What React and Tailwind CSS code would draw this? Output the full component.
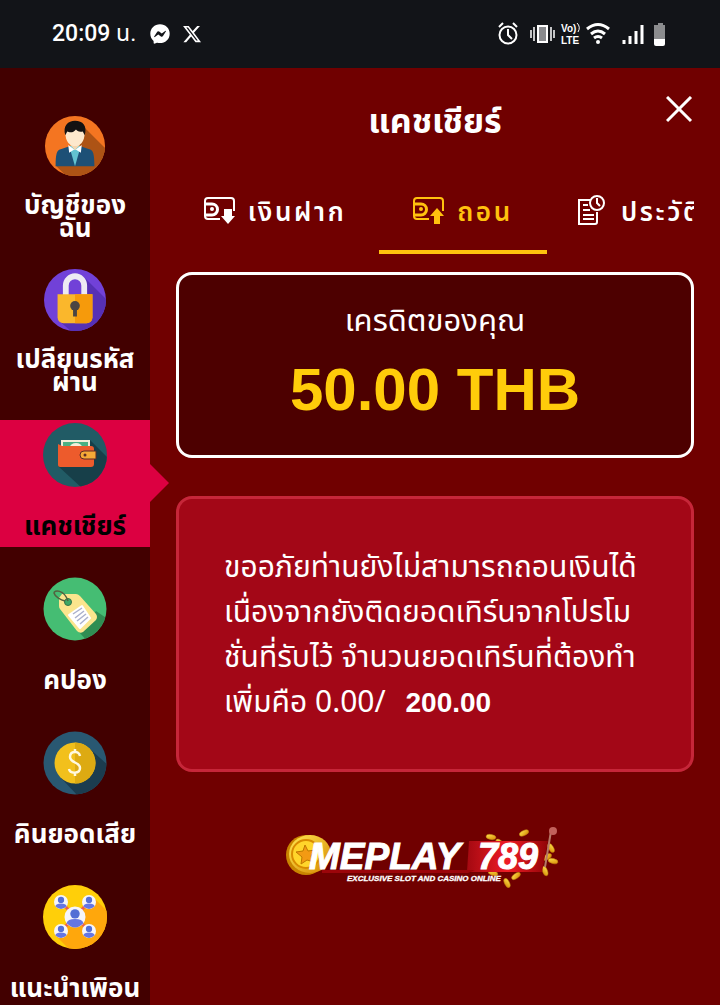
import React, { useState } from 'react';
import { FaFacebookMessenger, FaXTwitter } from 'react-icons/fa6';

const AccountIcon = () => (
    <svg viewBox="0 0 64 64" className="size-16" aria-hidden="true">
        <clipPath id="accountClip"><circle cx="32" cy="32" r="31" /></clipPath>
        <g clipPath="url(#accountClip)">
            <rect width="64" height="64" fill="#f47521" />
            <path d="M41 12 L66 37 L66 66 L26 66 L12 52 L32 30Z" fill="#ad5315" />
            <path d="M12 53 C12 40 13 36 18 35 L27 32 H37 L46 35 C51 36 52 40 52 53Z" fill="#1d5076" />
            <path d="M26 32 L32 53 L38 32Z" fill="#62c3d1" />
            <path d="M25 31 L32 36 L39 31 L38 39 L32 35 L26 39Z" fill="#fff" />
            <path d="M27 25 H37 V31 L32 36 L27 31Z" fill="#f5d6af" />
            <path d="M22 18 C22 10 42 10 42 18 C42 28 37 32 32 32 C27 32 22 28 22 18Z" fill="#fde8cc" />
            <path d="M22 21 C19 11 25 6 32 6 C40 6 45 11 42 21 L40 17 C36 18 34 16 33 15 C30 19 26 18 24 17Z" fill="#141212" />
        </g>
    </svg>
);

const PasswordIcon = () => (
    <svg viewBox="0 0 64 64" className="size-16" aria-hidden="true">
        <clipPath id="lockClip"><circle cx="32" cy="32" r="32" /></clipPath>
        <g clipPath="url(#lockClip)">
            <rect width="64" height="64" fill="#7141d8" />
            <path d="M42 9 L66 33 V66 H30 L16 54 L40 30Z" fill="#5630b5" />
            <path d="M22.500 28 V17 a9.500 9.500 0 0 1 19 0 V28" fill="none" stroke="#edeaf3" strokeWidth="6" />
            <path d="M14 26 H50 V50 a6 6 0 0 1 -6 6 H20 a6 6 0 0 1 -6 -6Z" fill="#fab72c" />
            <path d="M32 26 H50 V50 a6 6 0 0 1 -6 6 H32Z" fill="#f69a0b" />
            <circle cx="32" cy="38" r="5" fill="#4b4543" />
            <path d="M30 39 H34 V49 H30Z" fill="#4b4543" />
        </g>
    </svg>
);

const WalletIcon = () => (
    <svg viewBox="0 0 64 64" className="size-16" aria-hidden="true">
        <clipPath id="walletClip"><circle cx="32" cy="32" r="32" /></clipPath>
        <g clipPath="url(#walletClip)">
            <rect width="64" height="64" fill="#215b65" />
            <path d="M47 17 L66 36 V66 H40 L15 43 L47 40Z" fill="#173f49" />
            <rect x="18" y="17" width="29" height="9" fill="#f2eed9" />
            <path d="M20 19 H45 V24 H39 a6 4 0 0 0 -12 0 H20Z" fill="#4bb184" />
            <path d="M15 21 L19 23 H48 a3 3 0 0 1 3 3 V41 a3 3 0 0 1 -3 3 H17 a2 2 0 0 1 -2 -2Z" fill="#ed5b2c" />
            <path d="M53 28 H41 a4 4 0 0 0 0 8 H53Z" fill="#f5a937" stroke="#5d2b25" />
            <circle cx="42" cy="32" r="1.500" fill="#5d2b25" />
        </g>
    </svg>
);

const CouponIcon = () => (
    <svg viewBox="0 0 64 64" className="size-16" aria-hidden="true">
        <clipPath id="couponClip"><circle cx="32" cy="32" r="31.500" /></clipPath>
        <g clipPath="url(#couponClip)">
            <rect width="64" height="64" fill="#45bd73" />
            <path d="M53 34 L66 43 V66 H46 L36 55Z" fill="#308e53" />
            <path d="M19 17 L33 17 Q35 17 37 19 L53 37 Q55 40 53 43 L40 55 Q37 57 34 54 L17 32 Q16 31 16 29 L16 21Z" fill="#fbe58d" />
            <path d="M39 29 L47 41 L37 51 L26 38Z" fill="#fff" stroke="#fff" strokeWidth="2" strokeLinejoin="round" />
            <path d="M30 37 L39 31 M32 41 L41 34 M34 44 L43 37 M37 47 L45 40" stroke="#abb1cd" strokeWidth="1.500" />
            <circle cx="25" cy="25" r="3.500" fill="#3da865" stroke="#347447" />
            <path d="M25 24 C21 12 11 13 11 16 C12 20 18 23 22 24" fill="none" stroke="#53613f" strokeWidth="1.500" />
        </g>
    </svg>
);

const CashbackIcon = () => (
    <svg viewBox="0 0 64 64" className="size-16" aria-hidden="true">
        <clipPath id="coinClip"><circle cx="32" cy="32" r="31.500" /></clipPath>
        <g clipPath="url(#coinClip)">
            <rect width="64" height="64" fill="#295872" />
            <path d="M47 18 L66 35 V66 H36 L18 47Z" fill="#1b3c4f" />
            <circle cx="32" cy="32" r="20.500" fill="#f2c01c" />
            <path d="M32 11.500 a20.500 20.500 0 0 1 0 41Z" fill="#ddaa12" />
            <path d="M37 25 C36 19 27 20 27 26 C27 32 37 31 37 37 C37 43 27 43 26 38 M32 18 V22 M32 41 V45" fill="none" stroke="#fff8df" strokeWidth="2.500" />
        </g>
    </svg>
);

const people = [
    [18, 17, 7],
    [46, 17, 7],
    [18, 46, 7],
    [46, 46, 7],
    [32, 32, 10.5],
];

const FriendsIcon = () => (
    <svg viewBox="0 0 64 64" className="size-16" aria-hidden="true">
        <clipPath id="friendsClip"><circle cx="32" cy="32" r="32" /></clipPath>
        <g clipPath="url(#friendsClip)">
            <rect width="64" height="64" fill="#ffcf09" />
            <path d="M50 12 L68 30 V68 H30 L12 50Z" fill="#ffa70c" />
            <path d="M18 17 L46 46 M46 17 L18 46" stroke="#ed6048" strokeWidth="3" />
            {people.map(([x, y, r]) => (
                <g key={`${x}-${y}`} transform={`translate(${x} ${y}) scale(${r / 10})`}>
                    <circle r="10" fill="#f5f5fa" />
                    <circle cy="-3" r="4.500" fill="#536fd5" />
                    <path d="M-8 6 Q-7 2 0 2 Q7 2 8 6 Q0 14 -8 6Z" fill="#6576e3" />
                </g>
            ))}
        </g>
    </svg>
);

const CardIcon = ({ up }) => (
    <svg viewBox="0 0 32 28" className="h-7 w-8 shrink-0" fill="none" stroke="currentColor" strokeWidth="2" aria-hidden="true">
        <path d="M30 14 V4 a3 3 0 0 0 -3 -3 H4 a3 3 0 0 0 -3 3 V19 a3 3 0 0 0 3 3 H16" />
        <path d="M2 7 H8 a5 5 0 0 1 0 11 H2" strokeWidth="3" />
        <circle cx="8" cy="12" r="2" fill="currentColor" stroke="none" />
        {up
            ? <path d="M24 11 L31 19 H27 V27 H21 V19 H17Z" fill="currentColor" stroke="none" />
            : <path d="M24 27 L31 19 H28 V12 H20 V19 H17Z" fill="currentColor" stroke="none" />}
    </svg>
);

const HistoryIcon = () => (
    <svg viewBox="0 0 28 32" className="h-8 w-7 shrink-0" fill="none" stroke="currentColor" strokeWidth="2" aria-hidden="true">
        <path d="M13 5 H2 V29 H18 a2 2 0 0 0 2 -2 V17" />
        <path d="M6 10 H11 M6 15 H13 M6 20 H17 M6 24 H17" />
        <circle cx="20" cy="8" r="7" />
        <path d="M20 3 V8 L23 11" />
    </svg>
);

const StatusIcons = () => (
    <svg viewBox="0 0 172 26" className="h-[26px] w-[172px]" fill="none" stroke="#fff" strokeWidth="2" role="img" aria-label="VoLTE">
        <circle cx="11" cy="14" r="8.500" />
        <path d="M11 8 V14 L15 18 M2 6 L6 2 M20 6 L16 2" />
        <rect x="41" y="5" width="9" height="16" fill="#898a8d" />
        <path d="M34 9 V17 M37 6 V20 M54 6 V20 M57 9 V17" strokeWidth="1.500" />
        <g fill="#fff" stroke="none" fontFamily="Liberation Sans" fontWeight="bold">
            <text x="64" y="11" fontSize="10">Vo)</text>
            <text x="64" y="23" fontSize="10">LTE</text>
        </g>
        <path d="M80 2 Q84 6 81 11" strokeWidth="1" />
        <path d="M90 8 Q101 -1 112 8 M94 13 Q101 7 108 13 M97 17 Q101 14 105 17" strokeWidth="3" />
        <circle cx="101" cy="21" r="2" fill="#fff" stroke="none" />
        <path d="M127 23 V19 M133 23 V15 M139 23 V10 M145 23 V4" strokeWidth="3" />
        <path d="M161 2 h5 v2 h2 v16 h-11 V4 h4Z" fill="#8b8c8e" stroke="none" />
        <path d="M157 18 h11 v5 q0 2 -2 2 h-7 q-2 0 -2 -2Z" fill="#fff" stroke="none" />
    </svg>
);

const coins = [
    [221, 17, 10], [254, 13, -25], [230, 23, 40], [281, 28, 60], [283, 41, 15],
    [275, 51, 70], [246, 56, -35], [237, 63, 65], [223, 53, 20], [277, 37, -30],
];

const Logo = () => (
    <svg viewBox="0 0 310 90" className="h-[90px] w-[310px]" role="img" aria-label="MEPLAY 789">
        <defs>
            <linearGradient id="logoRed" x1="0" x2="1">
                <stop offset="0" stopColor="#a40911" />
                <stop offset="0.500" stopColor="#ef1c25" />
                <stop offset="1" stopColor="#900407" />
            </linearGradient>
            <linearGradient id="logoGold" x1="0" y1="0" x2="1" y2="1">
                <stop offset="0" stopColor="#ffe852" />
                <stop offset="1" stopColor="#d58600" />
            </linearGradient>
        </defs>
        {coins.map(([x, y, r]) => (
            <ellipse key={`${x}-${y}`} cx={x} cy={y + 10} rx="5" ry="2.500" fill="url(#logoGold)" stroke="#b97a0c" strokeWidth="0.500" transform={`rotate(${r} ${x} ${y + 10})`} />
        ))}
        <circle cx="36" cy="45" r="20" fill="#c98400" />
        <ellipse cx="40" cy="44" rx="21" ry="19" fill="url(#logoGold)" />
        <circle cx="36" cy="44" r="14" fill="#ffd52b" stroke="#d98b00" strokeWidth="2" />
        <path d="M35 35 L38 41 L45 40 L41 46 L44 52 L37 50 L31 54 L32 47 L26 42 L33 41Z" fill="#f39a13" stroke="#bf7800" />
        <path d="M199 31 H278 L272 62 H197Z" fill="url(#logoRed)" />
        <path d="M52 60 H205 L198 63 H52Z" fill="#9c050a" />
        <path d="M275 57 L281 21" stroke="#b67867" strokeWidth="2" />
        <circle cx="283" cy="21" r="4" fill="#c2605a" />
        <g fontFamily="Liberation Sans" fontStyle="italic" fontWeight="bold" fill="#fff">
            <text x="39" y="59" fontSize="37" stroke="#fff">MEPLAY</text>
            <text x="208" y="59" fontSize="36" stroke="#fff">789</text>
            <text x="77" y="71" fontSize="8" stroke="#fff" strokeWidth="0.300">EXCLUSIVE SLOT AND CASINO ONLINE</text>
        </g>
    </svg>
);

const menu = [
    { id: 'account', lines: ['บัญชีของ', 'ฉัน'], Icon: AccountIcon },
    { id: 'password', lines: ['เปลียนรหัส', 'ผ่าน'], Icon: PasswordIcon },
    { id: 'cashier', lines: ['แคชเชียร์'], Icon: WalletIcon },
    { id: 'coupon', lines: ['คปอง'], Icon: CouponIcon },
    { id: 'cashback', lines: ['คินยอดเสีย'], Icon: CashbackIcon },
    { id: 'friends', lines: ['แนะนำเพิอน'], Icon: FriendsIcon },
];

const tabs = [
    { id: 'deposit', label: 'เงินฝาก', icon: <CardIcon /> },
    { id: 'withdraw', label: 'ถอน', icon: <CardIcon up /> },
    { id: 'history', label: 'ประวัติ', icon: <HistoryIcon /> },
];

const App = () => {
    const [active, setActive] = useState('cashier');
    const [tab, setTab] = useState('withdraw');

    return (
        <div className="flex min-h-screen flex-col bg-[#700000] font-['Noto_Sans','Noto_Sans_Thai',sans-serif] text-white">
            <header className="flex h-[68px] items-center justify-between bg-[#121418] pr-[51px] pl-[52px]">
                <div className="flex items-center gap-3">
                    <span className="font-['Roboto','Noto_Sans_Thai',sans-serif] text-[23px]"><span className="font-medium">20:09</span> น.</span>
                    <FaFacebookMessenger className="ml-0.5 size-5" />
                    <FaXTwitter className="size-5" />
                </div>
                <StatusIcons />
            </header>

            <div className="flex flex-1">
                <nav className="flex w-[150px] shrink-0 flex-col gap-[27px] bg-[#420000] pt-11">
                    {menu.map(({ id, lines, Icon }) => (
                        <button
                            key={id}
                            onClick={() => setActive(id)}
                            className={`relative flex h-[127px] flex-col items-center pt-[3px] text-[26px] leading-[23px] font-bold ${active === id ? 'bg-[#dc0041] text-black' : ''}`}
                        >
                            <Icon />
                            <span className="flex flex-1 flex-col justify-center pt-4 whitespace-nowrap">
                                {lines.map(line => <span key={line}>{line}</span>)}
                            </span>
                            {active === id && (
                                <svg viewBox="0 0 19 38" className="absolute top-11 left-full h-[38px] w-[19px]" aria-hidden="true">
                                    <path d="M0 0 L19 19 L0 38Z" fill="#dc0041" />
                                </svg>
                            )}
                        </button>
                    ))}
                </nav>

                <main className="flex min-w-0 flex-1 flex-col px-[26px]">
                    <div className="relative flex h-[104px] items-center justify-center">
                        <h1 className="text-[34px] font-bold">แคชเชียร์</h1>
                        <button aria-label="ปิด" className="absolute top-7 right-0">
                            <svg viewBox="0 0 28 28" className="size-7" stroke="#fff" strokeWidth="3" aria-hidden="true">
                                <path d="M1 1 L25 25 M25 1 L1 25" />
                            </svg>
                        </button>
                    </div>

                    <div role="tablist" className="flex h-[82px] gap-5 overflow-hidden pl-[15px]">
                        {tabs.map(t => (
                            <button
                                key={t.id}
                                role="tab"
                                aria-selected={tab === t.id}
                                onClick={() => setTab(t.id)}
                                className={`flex min-w-[168px] shrink-0 items-center justify-center gap-3 border-b-4 px-2.5 text-[26px] font-semibold tracking-widest ${tab === t.id ? 'border-[#ffc20e] text-[#ffc20e]' : 'border-transparent'} last:justify-start last:gap-4`}
                            >
                                {t.icon}
                                <span>{t.label}</span>
                            </button>
                        ))}
                    </div>

                    <section className="mt-[18px] flex h-[186px] flex-col items-center rounded-2xl border-3 border-white bg-[#4d0000] pt-6">
                        <h2 className="text-[31px] leading-10">เครดิตของคุณ</h2>
                        <p className="mt-4 font-['Liberation_Sans',sans-serif] text-[60px] leading-[70px] font-bold text-[#ffcc0a]">50.00 THB</p>
                    </section>

                    <section className="mt-[38px] rounded-2xl border-3 border-[#c62639] bg-[#a30717] px-[45px] py-11">
                        <p className="text-[30px] leading-[45px] whitespace-nowrap">
                            ขออภัยท่านยังไม่สามารถถอนเงินได้<br />
                            เนื่องจากยังติดยอดเทิร์นจากโปรโม<br />
                            ชั่นที่รับไว้ จำนวนยอดเทิร์นที่ต้องทำ<br />
                            เพิ่มคือ 0.00/ <b className="ml-3 font-['Liberation_Sans',sans-serif] text-[28px]">200.00</b>
                        </p>
                    </section>

                    <div className="mt-[38px] flex justify-center pr-5">
                        <Logo />
                    </div>
                </main>
            </div>
        </div>
    );
};

export default App;
